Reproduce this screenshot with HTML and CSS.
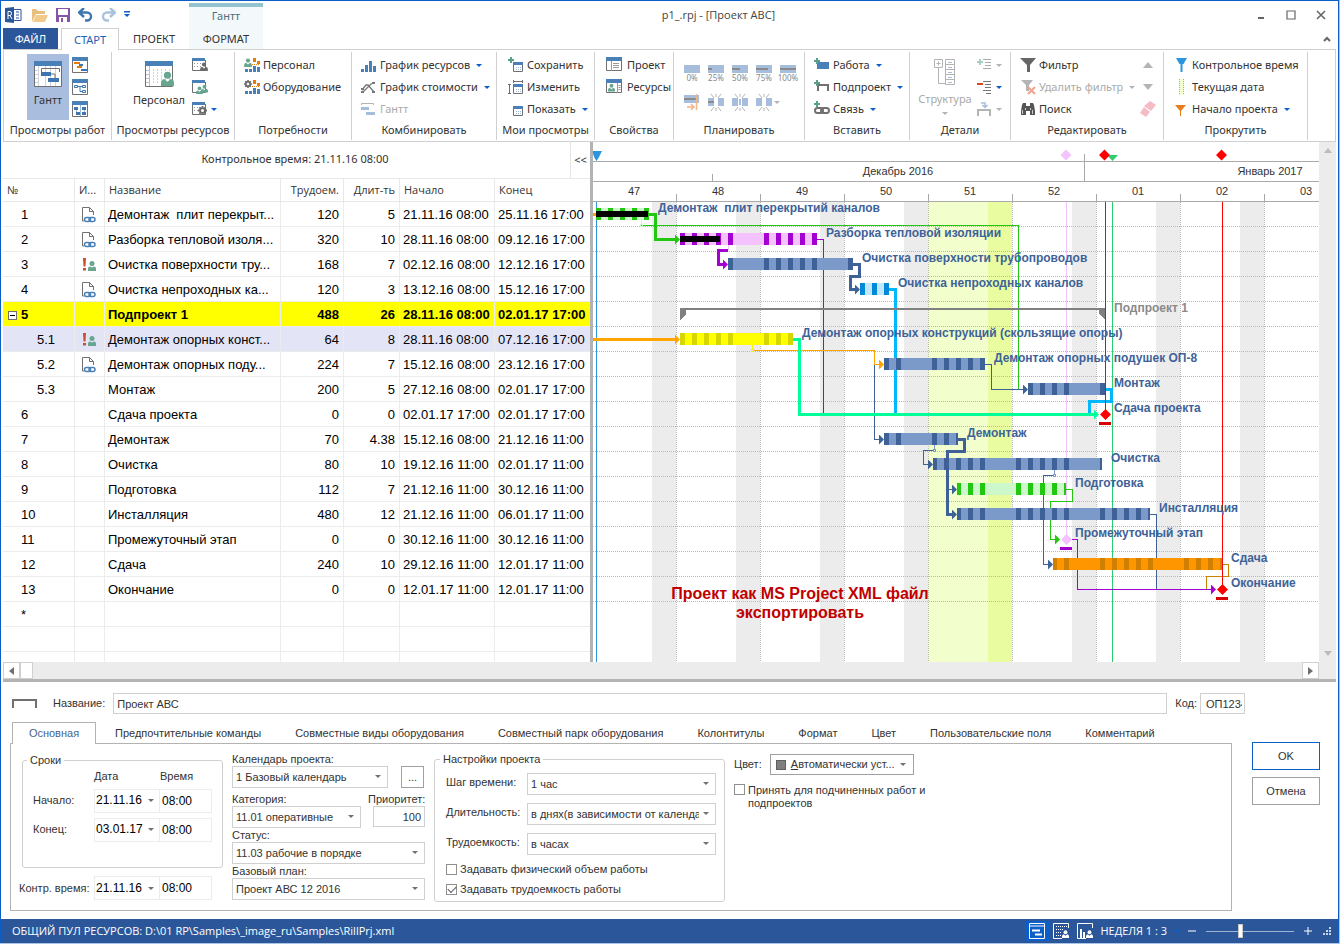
FILE: index.html
```html
<!DOCTYPE html>
<html lang="ru">
<head>
<meta charset="utf-8">
<title>p1_.rpj - [Проект АВС]</title>
<link rel="stylesheet" href="styles.css">
</head>
<body>
<svg class="sprite" aria-hidden="true">
  <defs>
    <symbol id="person" viewBox="0 0 12 14"><circle cx="6" cy="4" r="3.3"/><path d="M0 14v-3q0-3 3-3.500l3 2.500 3-2.500q3 .5 3 3.500v3z"/></symbol>
    <symbol id="gear" viewBox="0 0 10 10"><circle cx="5" cy="5" r="2.700" fill="none" stroke="currentColor" stroke-width="2"/><path d="M5 0v2M5 8v2M0 5h2M8 5h2M1.500 1.500l1.500 1.500M7 7l1.500 1.500M1.500 8.500L3 7M7 3l1.500-1.500" stroke="currentColor" stroke-width="2" fill="none"/></symbol>
    <symbol id="sheet" viewBox="0 0 16 16"><path d="M.5 4v11.500h15V4" fill="#fff" stroke="#707070"/><path d="M0 0h16v4H0z" fill="#4a80b8"/></symbol>
    <symbol id="plus" viewBox="0 0 6 6"><path d="M3 0v6M0 3h6" stroke="#58a08c" stroke-width="2"/></symbol>
    <symbol id="doc" viewBox="0 0 14 16"><path d="M2 14H.5V.5h7l4 4V8M7.500.5v4h4" fill="none" stroke="#707070"/><rect x="2.500" y="10.500" width="6" height="4" rx="2" fill="none" stroke="#4a80b8" stroke-width="1.500"/><rect x="7" y="10.500" width="6" height="4" rx="2" fill="none" stroke="#4a80b8" stroke-width="1.500"/></symbol>
    <symbol id="alert" viewBox="0 0 14 14"><path d="M1 0h3l-.5 8.500h-2zM1 10h3v2.500H1z" fill="#c8502e"/><circle cx="10" cy="5.500" r="2.500" fill="#69a68f"/><path d="M6 13V10.500q0-2 2-2l2 1 2-1q2 0 2 2V13z" fill="#69a68f"/></symbol>
    <symbol id="cal" viewBox="0 0 10 10"><path d="M.5 2v7.500h9V2" fill="#fff" stroke="#707070"/><path d="M0 0h10v3H0z" fill="#4a80b8"/><path d="M3 5.500h5M3 7.500h5" stroke="#9db9d8" stroke-dasharray="1 1"/></symbol>
    <symbol id="burst" viewBox="0 0 16 17"><path d="M0 4h6v8H0zM10 4h6v8h-6z" fill="#a6bedb"/><path d="M3 0l3 4M8 0v3M13 0l-3 4M3 17l3-4M8 17v-3M13 17l-3-4" stroke="#b4b4b4" fill="none"/></symbol>
    <marker id="m-navy" viewBox="0 0 5 10" markerUnits="userSpaceOnUse" markerWidth="5" markerHeight="10" refX="0" refY="5"><path d="M0 0l5 5-5 5z" fill="#3e6298"/></marker>
    <marker id="m-green" viewBox="0 0 5 10" markerUnits="userSpaceOnUse" markerWidth="5" markerHeight="10" refX="0" refY="5"><path d="M0 0l5 5-5 5z" fill="#22c70f"/></marker>
    <marker id="m-violet" viewBox="0 0 5 10" markerUnits="userSpaceOnUse" markerWidth="5" markerHeight="10" refX="0" refY="5"><path d="M0 0l5 5-5 5z" fill="#a500d2"/></marker>
    <marker id="m-orange" viewBox="0 0 5 10" markerUnits="userSpaceOnUse" markerWidth="5" markerHeight="10" refX="0" refY="5"><path d="M0 0l5 5-5 5z" fill="#ffa500"/></marker>
    <marker id="m-mint" viewBox="0 0 5 10" markerUnits="userSpaceOnUse" markerWidth="5" markerHeight="10" refX="0" refY="5"><path d="M0 0l5 5-5 5z" fill="#00ff99"/></marker>
    <pattern id="weekend" patternUnits="userSpaceOnUse" x="652" y="202" width="84" height="460"><path d="M0 0h24v460H0z" fill="#ececec"/></pattern>
  </defs>
</svg>

<div class="window">
  <header class="titlebar">
    <div class="quick">
      <svg width="17" height="16"><path d="M7 2.500h9v11H7" fill="#fff" stroke="#2b579a"/><path d="M0 1l9-1v16l-9-1z" fill="#2b579a"/><path d="M11 5h3M11 8h3M11 11h3" stroke="#2b579a"/><path d="M3 12V4.500h2q1.500 0 1.500 2t-1.500 2H3M5 8.500l2 3.500" stroke="#fff" fill="none"/></svg>
      <button aria-label="Открыть"><svg width="16" height="14"><path d="M0 14V1h4l2 2h7v3H4z" fill="#e8bf7c"/><path d="M4 7h12l-3 7H1z" fill="#f0cb8c"/></svg></button>
      <button aria-label="Сохранить файл"><svg width="14" height="14"><path d="M0 0h14v14H0z" fill="#8555a8"/><path d="M2 1h10v6H2zM3 9h8v5H3z" fill="#fff"/><path d="M5 10h2v4H5z" fill="#8555a8"/></svg></button>
      <button aria-label="Отменить действие"><svg width="15" height="14"><path d="M6 0L1 4.500 6 9M1.500 4.500H9a4 4 0 010 8H7" fill="none" stroke="#3f76ad" stroke-width="2.400"/></svg></button>
      <button aria-label="Повторить"><svg width="15" height="14"><path d="M9 0l5 4.500L9 9M13.500 4.500H6a4 4 0 000 8h2" fill="none" stroke="#a9c3de" stroke-width="2.400"/></svg></button>
      <button aria-label="Настроить"><svg width="6" height="7"><path d="M0 0h6v1.500H0zM0 3h6L3 6z" fill="#0a5fc8"/></svg></button>
    </div>
    <div class="context">Гантт</div>
    <h1>p1_.rpj - [Проект АВС]</h1>
    <div class="winbtns">
      <button aria-label="Свернуть"><svg width="10" height="10"><path d="M2 7h6v2H2z" fill="#666"/></svg></button>
      <button aria-label="Развернуть"><svg width="10" height="10"><path d="M1 1h8v8H1z" fill="none" stroke="#666" stroke-width="1.200"/></svg></button>
      <button aria-label="Закрыть"><svg width="10" height="10"><path d="M1 1l8 8M9 1L1 9" stroke="#666" stroke-width="1.600"/></svg></button>
    </div>
  </header>

  <nav class="tabs">
    <button class="tab file">ФАЙЛ</button>
    <button class="tab start">СТАРТ</button>
    <button class="tab project">ПРОЕКТ</button>
    <button class="tab format">ФОРМАТ</button>
    <button class="collapse" aria-label="Свернуть ленту"><svg width="8" height="6"><path d="M1 5l3-3 3 3" fill="none" stroke="#666" stroke-width="2"/></svg></button>
  </nav>

  <section class="ribbon">
    <div class="group g108">
      <div class="body views">
        <button class="big active"><svg width="28" height="26"><path d="M.5 4v21.500h27V4" fill="#fff" stroke="#707070"/><path d="M0 0h28v5H0z" fill="#4a80b8"/><path d="M4.500 5v20M11.500 5v20M16.500 5v20M21.500 5v20M1 9.500h4M1 13.500h4M1 17.500h4M1 21.500h4" stroke="#cdd5df"/><path d="M7.500 11V7.500h18V11" fill="none" stroke="#707070"/><path d="M7 11h10v4H7zM14 17h11v4H14z" fill="#3e75b0"/><path d="M17 13h4v4" stroke="#707070" fill="none"/></svg>Гантт</button>
        <div class="stack">
          <button aria-label="Диаграмма"><svg width="16" height="16"><use href="#sheet"/><path d="M2 5h6v2H2zM5 9h5v2H5z" fill="#e8790c"/><path d="M7 7h4v2H7zM9 12h6v2H9z" fill="#3e75b0"/></svg></button>
          <button aria-label="Сеть"><svg width="16" height="16"><use href="#sheet"/><path d="M2.500 6.500h3v2h-3zM10.500 6.500h3v2h-3zM10.500 11.500h3v2h-3zM6 7.500h4M8 7.500v5h2" fill="none" stroke="#3e75b0"/></svg></button>
          <button aria-label="Доска"><svg width="16" height="16"><use href="#sheet"/><path d="M2 6h4v3H2zM10 6h4v3h-4zM4 11h4v3H4zM10 11h4v3h-4z" fill="#3e75b0"/><path d="M8.500 4v11M4.500 9v2M12.500 9v2" stroke="#9db9d8"/></svg></button>
        </div>
      </div>
      <div class="caption">Просмотры работ</div>
    </div>
    <div class="group g123">
      <div class="body views2">
        <button class="big"><svg width="29" height="26"><path d="M.5 4v21.500h27V4" fill="#fff" stroke="#707070"/><path d="M0 0h28v5H0z" fill="#4a80b8"/><path d="M4.500 5v20M1 9.500h4M1 13.500h4M1 17.500h4M1 21.500h4" stroke="#b8c2ce"/><path d="M8 9h18M8 12h18M8 15h18M8 18h18M8 21h18" stroke="#9aa8b8" stroke-dasharray="1 3"/><use href="#person" x="16" y="9" width="13" height="17" fill="#69a68f"/></svg>Персонал</button>
        <div class="stack">
          <button aria-label="Люди"><svg width="16" height="16"><path d="M.5 3v10.500h13V3" fill="#fff" stroke="#707070"/><path d="M0 1h13v3H0z" fill="#4a80b8"/><path d="M2 6.500h9M2 9.500h9" stroke="#999" stroke-dasharray="1 2"/><use href="#person" x="8" y="5" width="8" height="9" fill="#6a6a6a"/></svg></button>
          <button aria-label="Команды"><svg width="16" height="16"><path d="M.5 3v10.500h13V3" fill="#fff" stroke="#707070"/><path d="M0 1h13v3H0z" fill="#4a80b8"/><use href="#person" x="4" y="7" width="7" height="8" fill="#69a68f"/><use href="#person" x="9" y="5" width="7" height="9" fill="#69a68f"/></svg></button>
          <button aria-label="Механизмы" class="wide"><svg width="16" height="16"><path d="M.5 3v10.500h13V3" fill="#fff" stroke="#707070"/><path d="M0 1h13v3H0z" fill="#4a80b8"/><path d="M2 6.500h9M2 9.500h9" stroke="#999" stroke-dasharray="1 2"/><g color="#6a6a6a"><use href="#gear" x="6" y="5" width="9" height="9"/></g></svg><i class="dd"></i></button>
        </div>
      </div>
      <div class="caption">Просмотры ресурсов</div>
    </div>
    <div class="group g117">
      <div class="body list">
        <button class="cmd"><svg width="16" height="16"><use href="#person" x="0" y="1" width="8" height="9" fill="#69a68f"/><path d="M9 1h3v4H9zM13 4h3v3h-3z" fill="#e8790c"/><path d="M1 12h3v3H1zM5 12h3v3H5zM9 9h3v6H9zM13 10h3v5h-3z" fill="#4a80b8"/><path d="M8 7.500h8" stroke="#e8790c" stroke-dasharray="1 1"/></svg>Персонал</button>
        <button class="cmd"><svg width="16" height="16"><g color="#6a6a6a"><use href="#gear" x="0" y="1" width="8" height="8"/></g><path d="M9 1h3v4H9zM13 4h3v3h-3z" fill="#e8790c"/><path d="M1 12h3v3H1zM5 12h3v3H5zM9 9h3v6H9zM13 10h3v5h-3z" fill="#4a80b8"/><path d="M8 7.500h8" stroke="#e8790c" stroke-dasharray="1 1"/></svg>Оборудование</button>
      </div>
      <div class="caption">Потребности</div>
    </div>
    <div class="group g145">
      <div class="body list">
        <button class="cmd"><svg width="16" height="16"><path d="M0 12h3v3H0zM4 8h3v7H4zM8 4h3v11H8zM12 9h3v6h-3z" fill="#4a80b8"/></svg>График ресурсов<i class="dd"></i></button>
        <button class="cmd"><svg width="16" height="16"><path d="M1 11l4-5 2 0 6 7M2 13l8-8 3-1" fill="none" stroke="#777" stroke-width="1.300"/><path d="M0 13h3M11 4h3M0 10h3M11 13h3" stroke="#777" stroke-width="2"/></svg>График стоимости<i class="dd"></i></button>
        <button class="cmd off" disabled><svg width="16" height="16"><path d="M.5 4V2.500h12V4" fill="none" stroke="#b4b4b4"/><path d="M0 6h8v3H0zM5 11h9v3H5z" fill="#a6bedb"/></svg>Гантт</button>
      </div>
      <div class="caption">Комбинировать</div>
    </div>
    <div class="group g98">
      <div class="body list">
        <button class="cmd"><svg width="16" height="16"><use href="#plus" width="6" height="6"/><use href="#cal" x="5" y="5" width="10" height="10"/></svg>Сохранить</button>
        <button class="cmd"><svg width="16" height="16"><path d="M5.500 1v3M14.500 1v3M5.500 2.500h9M0 5.500h3M1.500 5v10M0 14.500h3" stroke="#707070" fill="none"/><use href="#cal" x="5" y="5" width="10" height="10"/></svg>Изменить</button>
        <button class="cmd"><svg width="16" height="16"><use href="#cal" x="5" y="5" width="10" height="10"/></svg>Показать<i class="dd"></i></button>
      </div>
      <div class="caption">Мои просмотры</div>
    </div>
    <div class="group g79">
      <div class="body list">
        <button class="cmd"><svg width="16" height="16"><path d="M.5.5h15v13H.5z" fill="#fff" stroke="#707070"/><path d="M0 0h16v4H0z" fill="#4a80b8"/><path d="M5.500 4v10M7 6.500h6M7 8.500h6M7 10.500h6" stroke="#999"/></svg>Проект</button>
        <button class="cmd"><svg width="16" height="16"><path d="M.5.5h15v13H.5z" fill="#fff" stroke="#707070"/><path d="M0 0h16v4H0z" fill="#4a80b8"/><use href="#person" x="2" y="4" width="7" height="9" fill="#69a68f"/><path d="M11.500 4v10M12.500 6.500h2M12.500 8.500h2M12.500 10.500h2" stroke="#999"/></svg>Ресурсы</button>
      </div>
      <div class="caption">Свойства</div>
    </div>
    <div class="group g131">
      <div class="body plan">
        <button disabled class="pct"><svg width="16" height="8"><path d="M0 0h16v8H0z" fill="#a6bedb"/></svg>0%</button>
        <button disabled class="pct"><svg width="16" height="8"><path d="M0 0h16v8H0z" fill="#a6bedb"/><path d="M0 3h4v2H0z" fill="#8a8a8a"/></svg>25%</button>
        <button disabled class="pct"><svg width="16" height="8"><path d="M0 0h16v8H0z" fill="#a6bedb"/><path d="M0 3h8v2H0z" fill="#8a8a8a"/></svg>50%</button>
        <button disabled class="pct"><svg width="16" height="8"><path d="M0 0h16v8H0z" fill="#a6bedb"/><path d="M0 3h12v2H0z" fill="#8a8a8a"/></svg>75%</button>
        <button disabled class="pct"><svg width="16" height="8"><path d="M0 0h16v8H0z" fill="#a6bedb"/><path d="M0 3h16v2H0z" fill="#8a8a8a"/></svg>100%</button>
        <button disabled aria-label="Сдвиг"><svg width="16" height="17"><path d="M0 1h15v8H0z" fill="#a6bedb"/><path d="M0 4h12v2H0z" fill="#8a8a8a"/><path d="M12.500 0v16M3 13h6M7 10l3 3-3 3" fill="none" stroke="#f2b48a" stroke-width="1.500"/></svg></button>
        <button disabled aria-label="Разделить"><svg width="16" height="17"><use href="#burst"/><path d="M0 7h6v2H0z" fill="#8a8a8a"/></svg></button>
        <button disabled aria-label="Разбить"><svg width="16" height="17"><use href="#burst"/><path d="M7 5h2v6H7z" fill="#a6bedb"/></svg></button>
        <button disabled aria-label="Соединить" class="wide"><svg width="16" height="17"><use href="#burst"/></svg><i class="dd grey"></i></button>
      </div>
      <div class="caption">Планировать</div>
    </div>
    <div class="group g105">
      <div class="body list">
        <button class="cmd"><svg width="16" height="16"><path d="M3 5h12v7H3z" fill="#4a80b8"/><use href="#plus" y="1" width="6" height="6"/></svg>Работа<i class="dd"></i></button>
        <button class="cmd"><svg width="16" height="16"><path d="M4 12V6h10v6" fill="none" stroke="#707070" stroke-width="2"/><use href="#plus" y="1" width="6" height="6"/></svg>Подпроект<i class="dd"></i></button>
        <button class="cmd"><svg width="16" height="16"><use href="#plus" y="0" width="6" height="6"/><rect x="1" y="7" width="8" height="5" rx="2.500" fill="none" stroke="#707070" stroke-width="2"/><rect x="7" y="7" width="8" height="5" rx="2.500" fill="none" stroke="#707070" stroke-width="2"/></svg>Связь<i class="dd"></i></button>
      </div>
      <div class="caption">Вставить</div>
    </div>
    <div class="group g101">
      <div class="body detail">
        <button class="big off" disabled><svg width="22" height="27"><path d="M.5.5h8v8h-8zM4.500 2.500v4M2.500 4.500h4M4.500 8.500v16H11M11.500.5h9v25h-9zM11.500 5.500h9M11.500 10.500h9M11.500 15.500h9M11.500 20.500h9" fill="none" stroke="#b4b4b4"/><path d="M14 3.500h4M14 8.500h4M14 13.500h4M14 18.500h4M14 23.500h4" stroke="#a6bedb"/></svg>Структура<i class="dd grey"></i></button>
        <div class="stack">
          <button disabled class="wide" aria-label="Добавить уровень"><svg width="16" height="16"><path d="M3 2v6M0 5h6" stroke="#a9d0c3" stroke-width="2"/><path d="M6 2.500h8M8 5.500h6M8 8.500h6M6 11.500h8" stroke="#aaa"/></svg><i class="dd grey"></i></button>
          <button class="wide" aria-label="Убрать уровень"><svg width="16" height="16"><path d="M0 5h6" stroke="#d8481c" stroke-width="2"/><path d="M6 2.500h8M8 5.500h6M8 8.500h6M6 11.500h8M9 14.500h5" stroke="#777"/></svg><i class="dd"></i></button>
          <button disabled class="wide" aria-label="Свернуть уровень"><svg width="16" height="16"><path d="M1 15V9h12v6" stroke="#b4b4b4" stroke-width="2" fill="none"/><path d="M4 2h4v4M5.500 4L8 6.500 10.500 4" fill="none" stroke="#a6bedb" stroke-width="1.500"/></svg><i class="dd grey"></i></button>
        </div>
      </div>
      <div class="caption">Детали</div>
    </div>
    <div class="group g153">
      <div class="body edit">
        <div class="list">
          <button class="cmd"><svg width="16" height="16"><path d="M0 1h16l-6 7v7H7V8z" fill="#666"/></svg>Фильтр</button>
          <button class="cmd off" disabled><svg width="16" height="16"><path d="M1 1h12L9 6v6H6V6z" fill="#b4b4b4"/><path d="M8 8l7 7M15 8l-7 7" stroke="#efa38c" stroke-width="2"/></svg>Удалить фильтр<i class="dd grey"></i></button>
          <button class="cmd"><svg width="16" height="16"><path d="M2 4l1-2h3v3h4V2h3l1 2 1 6v4h-5v-4H6v4H1v-4z" fill="#555"/><path d="M2.500 13V9M12.500 13V9M5.500 7v2M10.500 7v2" stroke="#ccc"/></svg>Поиск</button>
        </div>
        <div class="stack arrows">
          <button disabled aria-label="Предыдущий"><svg width="16" height="16"><path d="M3 11h10L8 5z" fill="#b4b4b4"/></svg></button>
          <button disabled aria-label="Следующий"><svg width="16" height="16"><path d="M3 5h10l-5 6z" fill="#b4b4b4"/></svg></button>
          <button disabled aria-label="Очистить"><svg width="16" height="16"><path d="M10 0l6 4-5 6-7-5z" fill="#f5bcc5"/><path d="M4 6l6 5-4 5-6-4z" fill="#f5bcc5"/></svg></button>
        </div>
      </div>
      <div class="caption">Редактировать</div>
    </div>
    <div class="group g144">
      <div class="body list">
        <button class="cmd"><svg width="16" height="16"><path d="M3 1h11l-3.500 6h-1v8h-2V7h-1z" fill="#2b95e0"/></svg>Контрольное время</button>
        <button class="cmd"><svg width="16" height="16"><path d="M6 0h5v16H6z" fill="#f2ffcc"/><path d="M6.500 0v16M10.500 0v16" stroke="#aaa" stroke-dasharray="1 1"/></svg>Текущая дата</button>
        <button class="cmd"><svg width="16" height="16"><path d="M2 4h11L8 10v5H7v-5z" fill="#e87f1e"/></svg>Начало проекта<i class="dd"></i></button>
      </div>
      <div class="caption">Прокрутить</div>
    </div>
  </section>

  <main class="work">
    <section class="sheet">
      <div class="control"><span>Контрольное время: 21.11.16 08:00</span><button>&lt;&lt;</button></div>
      <table>
        <colgroup><col class="c1"><col class="c2"><col class="c3"><col class="c4"><col class="c5"><col class="c6"><col class="c6"></colgroup>
        <thead><tr><th>№</th><th>И...</th><th>Название</th><th class="r">Трудоем.</th><th class="r">Длит-ть</th><th>Начало</th><th>Конец</th></tr></thead>
        <tbody>
          <tr><td class="n">1</td><td class="i"><svg width="14" height="16"><use href="#doc"/></svg></td><td>Демонтаж  плит перекрыт...</td><td class="r">120</td><td class="r">5</td><td>21.11.16 08:00</td><td>25.11.16 17:00</td></tr>
          <tr><td class="n">2</td><td class="i"><svg width="14" height="16"><use href="#doc"/></svg></td><td>Разборка тепловой изоля...</td><td class="r">320</td><td class="r">10</td><td>28.11.16 08:00</td><td>09.12.16 17:00</td></tr>
          <tr><td class="n">3</td><td class="i"><svg width="14" height="14"><use href="#alert"/></svg></td><td>Очистка поверхности тру...</td><td class="r">168</td><td class="r">7</td><td>02.12.16 08:00</td><td>12.12.16 17:00</td></tr>
          <tr><td class="n">4</td><td class="i"><svg width="14" height="16"><use href="#doc"/></svg></td><td>Очистка непроходных ка...</td><td class="r">120</td><td class="r">3</td><td>13.12.16 08:00</td><td>15.12.16 17:00</td></tr>
          <tr class="sum"><td class="fold"><button aria-label="Свернуть подпроект"></button>5</td><td></td><td>Подпроект 1</td><td class="r">488</td><td class="r">26</td><td>28.11.16 08:00</td><td>02.01.17 17:00</td></tr>
          <tr class="sel"><td class="s">5.1</td><td class="i"><svg width="14" height="14"><use href="#alert"/></svg></td><td>Демонтаж опорных конст...</td><td class="r">64</td><td class="r">8</td><td>28.11.16 08:00</td><td>07.12.16 17:00</td></tr>
          <tr><td class="s">5.2</td><td class="i"><svg width="14" height="16"><use href="#doc"/></svg></td><td>Демонтаж опорных поду...</td><td class="r">224</td><td class="r">7</td><td>15.12.16 08:00</td><td>23.12.16 17:00</td></tr>
          <tr><td class="s">5.3</td><td></td><td>Монтаж</td><td class="r">200</td><td class="r">5</td><td>27.12.16 08:00</td><td>02.01.17 17:00</td></tr>
          <tr><td class="n">6</td><td></td><td>Сдача проекта</td><td class="r">0</td><td class="r">0</td><td>02.01.17 17:00</td><td>02.01.17 17:00</td></tr>
          <tr><td class="n">7</td><td></td><td>Демонтаж</td><td class="r">70</td><td class="r">4.38</td><td>15.12.16 08:00</td><td>21.12.16 11:00</td></tr>
          <tr><td class="n">8</td><td></td><td>Очистка</td><td class="r">80</td><td class="r">10</td><td>19.12.16 11:00</td><td>02.01.17 11:00</td></tr>
          <tr><td class="n">9</td><td></td><td>Подготовка</td><td class="r">112</td><td class="r">7</td><td>21.12.16 11:00</td><td>30.12.16 11:00</td></tr>
          <tr><td class="n">10</td><td></td><td>Инсталляция</td><td class="r">480</td><td class="r">12</td><td>21.12.16 11:00</td><td>06.01.17 11:00</td></tr>
          <tr><td class="n">11</td><td></td><td>Промежуточный этап</td><td class="r">0</td><td class="r">0</td><td>30.12.16 11:00</td><td>30.12.16 11:00</td></tr>
          <tr><td class="n">12</td><td></td><td>Сдача</td><td class="r">240</td><td class="r">10</td><td>29.12.16 11:00</td><td>12.01.17 11:00</td></tr>
          <tr><td class="n">13</td><td></td><td>Окончание</td><td class="r">0</td><td class="r">0</td><td>12.01.17 11:00</td><td>12.01.17 11:00</td></tr>
          <tr><td class="n">*</td><td></td><td></td><td></td><td></td><td></td><td></td></tr>
          <tr><td></td><td></td><td></td><td></td><td></td><td></td><td></td></tr>
          <tr><td></td><td></td><td></td><td></td><td></td><td></td><td></td></tr>
        </tbody>
      </table>
    </section>

    <section class="chart">
      <svg width="726" height="520" viewBox="593 142 726 520" role="img" aria-label="Диаграмма Гантта">
        <path d="M652 202h667v460H652z" fill="url(#weekend)"/>
        <path d="M928 202h60v460h-60z" fill="#f2ffcc"/><path d="M988 202h24v460h-24z" fill="#e9fda0"/>
        <g shape-rendering="crispEdges">
          <path class="dots" d="M593 226.500h726M593 251.500h726M593 276.500h726M593 301.500h726M593 326.500h726M593 351.500h726M593 376.500h726M593 401.500h726M593 426.500h726M593 451.500h726M593 476.500h726M593 501.500h726M593 526.500h726M593 551.500h726M593 576.500h726M593 601.500h726"/>
          <path class="dots" d="M676.500 202v460M760.500 202v460M844.500 202v460M928.500 202v460M1012.500 202v460M1096.500 202v460M1180.500 202v460M1264.500 202v460"/>
          <path class="axis" d="M593 161.500h726M593 181.500h726M593 201.500h726M712.500 174v7M1084.500 154v27M676.500 194v7M760.500 194v7M844.500 194v7M928.500 194v7M1012.500 194v7M1096.500 194v7M1180.500 194v7M1264.500 194v7"/>
          <path d="M596.500 202v460" stroke="#2b95e0"/>
          <path d="M1066.500 202v337" stroke="#f3c2ff"/>
          <path d="M1112.500 202v460" stroke="#2ecc71"/>
        </g>
        <g class="scale">
          <text x="634" y="195">47</text><text x="718" y="195">48</text><text x="802" y="195">49</text><text x="886" y="195">50</text><text x="970" y="195">51</text><text x="1054" y="195">52</text><text x="1138" y="195">01</text><text x="1222" y="195">02</text><text x="1306" y="195">03</text>
          <text x="898" y="175">Декабрь 2016</text><text x="1270" y="175">Январь 2017</text>
        </g>
        <g shape-rendering="crispEdges">
          <path class="l" stroke="#22c70f" d="M641 225.500h377.500V389"/>
          <path class="l" stroke="#a500d2" d="M817 239.500h6.500V414"/>
          <path class="l" stroke="#3e6298" marker-end="url(#m-navy)" d="M874.500 364v75.500H879"/>
          <path class="l" stroke="#ffa500" marker-end="url(#m-orange)" d="M753 350.500h121.500v14H879"/>
          <path class="l" stroke="#3e6298" marker-end="url(#m-navy)" d="M985 364.500h6.500v25H1023"/>
          <path class="l" stroke="#3e6298" marker-end="url(#m-navy)" d="M934 450.500h-10.500v14h4.500"/>
          <path class="l" stroke="#3e6298" marker-end="url(#m-navy)" d="M947 489.500h5"/>
          <path class="l" stroke="#22c70f" marker-end="url(#m-green)" d="M1066 489.500h6.500v12h-22v38h4.500"/>
          <path class="l" stroke="#3e6298" d="M1150 514.500h6.500V589"/>
          <path class="l" stroke="#a500d2" marker-end="url(#m-violet)" d="M1072 539.500h5.500v50H1211"/>
          <path class="l" stroke="#d08000" d="M1222 564.500h6.500v12h-22V589"/>
          <path class="t" stroke="#00b8ff" d="M889 289.500h6.500V414"/>
          <path class="t" stroke="#00ff99" marker-end="url(#m-mint)" d="M793 339.500h6.500v75H1094"/>
          <path class="t" stroke="#22c70f" marker-end="url(#m-green)" d="M649 214.500h6.500v25H675"/>
          <path class="t" stroke="#a500d2" marker-end="url(#m-violet)" d="M728 250.500h-9.500v14h4.500"/>
          <path class="t" stroke="#3e6298" marker-end="url(#m-navy)" d="M853 264.500h6.500v12h-9v13h4.500"/>
          <path class="t" stroke="#ffa500" marker-end="url(#m-orange)" d="M593 339.500h82"/>
          <path class="t" stroke="#00b8ff" d="M1105 389.500h6.500v12h-22V413"/>
          <path class="t" stroke="#ffa500" d="M593 214.500h4"/>

          <path fill="#ccf8cc" d="M596 208h53v12h-53z"/><path class="s" stroke="#22c70f" d="M596 214h5m7 0h5m7 0h5m7 0h5m7 0h5"/><path d="M596 211h52v6h-52z"/>
          <path fill="#f3c2ff" d="M680 233h137v12H680z"/><path class="s" stroke="#a500d2" d="M680 239h5m7 0h5m7 0h5m7 0h5m7 0h5m31 0h5m7 0h5m7 0h5m7 0h5m7 0h5"/><path d="M680 236h40v6h-40z"/>
          <path fill="#7b9ac9" d="M728 258h125v12H728zM884 358h101v12H884zM1028 383h77v12h-77zM884 433h74v12h-74zM933 458h169v12H933zM957 508h193v12H957z"/>
          <path class="s" stroke="#3e6298" d="M728 264h5m31 0h5m7 0h5m7 0h5m7 0h5m7 0h5m31 0h5M884 364h5m7 0h5m31 0h5m7 0h5m7 0h5m7 0h5m7 0h5M1028 389h5m7 0h5m7 0h5m7 0h5m31 0h5M884 439h5m7 0h5m31 0h5m7 0h5m7 0h2M933 464h4m7 0h5m7 0h5m7 0h5m7 0h5m31 0h5m7 0h5m7 0h5m7 0h5m7 0h5m31 0h2M957 514h4m7 0h5m7 0h5m31 0h5m7 0h5m7 0h5m7 0h5m7 0h5m31 0h5m7 0h5m7 0h5m7 0h5m7 0h2"/>
          <path fill="#c2e8ff" d="M860 283h29v12h-29z"/><path class="s" stroke="#0089d6" d="M860 289h5m7 0h5m7 0h5"/>
          <path fill="#ff0" d="M680 333h113v12H680z"/><path class="s" stroke="#d6d600" d="M680 339h5m7 0h5m7 0h5m7 0h5m7 0h5m31 0h5m7 0h5m7 0h5"/>
          <path fill="#ccf8cc" d="M957 483h109v12H957z"/><path class="s" stroke="#22c70f" d="M957 489h4m7 0h5m7 0h5m31 0h5m7 0h5m7 0h5m7 0h5m7 0h2"/>
          <path fill="#ff9600" d="M1053 558h169v12h-169z"/><path class="s" stroke="#d08000" d="M1053 564h4m7 0h5m31 0h5m7 0h5m7 0h5m7 0h5m7 0h5m31 0h5m7 0h5m7 0h5m7 0h2"/>

          <path class="l" stroke="#3e6298" d="M1054 475.500h-10.500V483M1043.500 495v13M1043.500 520v44.500h4.500" marker-end="url(#m-navy)"/>
          <path class="t" stroke="#3e6298" marker-end="url(#m-navy)" d="M958 439.500h6.500v12h-17v63h4.500"/>
          <path class="l" stroke="#ccf8cc" d="M641.500 220v4m-1 0h2v2h-2z"/>
          <path class="l" stroke="#f3c2ff" d="M728.500 245v5"/>
          <path class="l" stroke="#f5f500" d="M752.500 345v4m-1 0h2v2h-2z"/>
          <path class="l" stroke="#7b9ac9" d="M934.500 445v4m-1 0h2v2h-2zM1054.500 470v4m-1 0h2v2h-2z"/>
          <path d="M1105.500 202v212M1222.500 202v387" stroke="#f00"/>
          <path fill="#808080" d="M680 308h425v12l-6-6v-4H686v4l-6 6z"/>
          <path fill="#d60000" d="M1099 422h12v3h-12zM1216 597h12v3h-12z"/><path fill="#a500d2" d="M1060 547h12v3h-12z"/>
        </g>
        <path fill="#f3c2ff" d="M1066 149.500l5.500 5.500-5.500 5.500-5.500-5.500zM1066.500 534l5.500 5.500-5.500 5.500-5.500-5.500z"/>
        <path fill="#2ecc71" d="M1107 155h11l-5.500 6z"/>
        <path fill="#f00" d="M1104.500 149.500l5.500 5.500-5.500 5.500-5.500-5.500zM1221.500 149.500l5.500 5.500-5.500 5.500-5.500-5.500zM1105.500 409l5.500 5.500-5.500 5.500-5.500-5.500zM1222.500 584l5.500 5.500-5.500 5.500-5.500-5.500z"/>
        <path fill="#2b95e0" d="M592 151h10l-3.500 7-2 3-2-3z"/>
        <g class="names">
          <text x="658" y="212">Демонтаж  плит перекрытий каналов</text>
          <text x="826" y="237">Разборка тепловой изоляции</text>
          <text x="862" y="262">Очистка поверхности трубопроводов</text>
          <text x="898" y="287">Очистка непроходных каналов</text>
          <text x="1114" y="312" class="dim">Подпроект 1</text>
          <text x="802" y="337">Демонтаж опорных конструкций (скользящие опоры)</text>
          <text x="994" y="362">Демонтаж опорных подушек ОП-8</text>
          <text x="1114" y="387">Монтаж</text>
          <text x="1114" y="412">Сдача проекта</text>
          <text x="967" y="437">Демонтаж</text>
          <text x="1111" y="462">Очистка</text>
          <text x="1075" y="487">Подготовка</text>
          <text x="1159" y="512">Инсталляция</text>
          <text x="1075" y="537">Промежуточный этап</text>
          <text x="1231" y="562">Сдача</text>
          <text x="1231" y="587">Окончание</text>
        </g>
        <g class="note"><text x="800" y="599">Проект как MS Project XML файл</text><text x="800" y="618">экспортировать</text></g>
      </svg>
    </section>
    <div class="vscroll"><i class="up"></i><i class="down"></i></div>
  </main>
  <div class="hscroll"><button aria-label="Влево"><i></i></button><span class="thumb"></span><button class="right" aria-label="Вправо"><i></i></button></div>

  <section class="props">
    <div class="namerow">
      <svg width="25" height="9"><path d="M1 9V1h23v8" fill="none" stroke="#707070" stroke-width="2"/></svg>
      <label for="name">Название:</label><input id="name" class="box grow" value="Проект АВС">
      <label for="code">Код:</label><input id="code" class="box code" value="ОП1234">
    </div>
    <div class="lower">
      <div class="dialog">
        <div class="ptabs">
          <button class="on">Основная</button><button>Предпочтительные команды</button><button>Совместные виды оборудования</button><button>Совместный парк оборудования</button><button>Колонтитулы</button><button>Формат</button><button>Цвет</button><button>Пользовательские поля</button><button>Комментарий</button>
        </div>
        <div class="page">
          <div class="col dates">
            <fieldset><legend>Сроки</legend>
              <div class="dgrid">
                <span></span><span>Дата</span><span>Время</span>
                <label for="d1">Начало:</label><span class="date"><input id="d1" value="21.11.16"><i></i></span><input class="time" aria-label="Время начала" value="08:00">
                <label for="d2">Конец:</label><span class="date"><input id="d2" value="03.01.17"><i></i></span><input class="time" aria-label="Время конца" value="08:00">
              </div>
            </fieldset>
            <div class="ctl"><label for="d3">Контр. время:</label><span class="date"><input id="d3" value="21.11.16"><i></i></span><input class="time" aria-label="Контрольное время" value="08:00"></div>
          </div>
          <div class="col cats">
            <div class="field first"><label for="cal-s">Календарь проекта:</label><div class="line"><span class="pick"><select id="cal-s"><option>1 Базовый календарь</option></select></span><button class="more">...</button></div></div>
            <div class="pair">
              <div class="field"><label for="cat">Категория:</label><span class="pick"><select id="cat"><option>11.01 оперативные</option></select></span></div>
              <div class="field prio"><label for="prio">Приоритет:</label><input id="prio" class="box" value="100"></div>
            </div>
            <div class="field"><label for="st">Статус:</label><span class="pick"><select id="st"><option>11.03 рабочие в порядке</option></select></span></div>
            <div class="field"><label for="bp">Базовый план:</label><span class="pick"><select id="bp"><option>Проект АВС 12 2016</option></select></span></div>
          </div>
          <fieldset class="col setup"><legend>Настройки проекта</legend>
            <div class="sgrid">
              <label for="step">Шаг времени:</label><span class="pick"><select id="step"><option>1 час</option></select></span>
              <label for="dur">Длительность:</label><span class="pick"><select id="dur"><option>в днях(в зависимости от календаря)</option></select></span>
              <label for="lab">Трудоемкость:</label><span class="pick"><select id="lab"><option>в часах</option></select></span>
            </div>
            <label class="check"><input type="checkbox"><span>Задавать физический объем работы</span></label>
            <label class="check"><input type="checkbox" checked><span>Задавать трудоемкость работы</span></label>
          </fieldset>
          <div class="col color">
            <div class="crow"><span>Цвет:</span><button class="cbtn"><b></b><span><u>А</u>втоматически уст...</span><i></i></button></div>
            <label class="check"><input type="checkbox"><span>Принять для подчиненных работ и подпроектов</span></label>
          </div>
        </div>
      </div>
      <div class="actions"><button class="ok">OK</button><button>Отмена</button></div>
    </div>
  </section>

  <footer class="status">
    <span class="path">ОБЩИЙ ПУЛ РЕСУРСОВ: D:\01 RP\Samples\_image_ru\Samples\RillPrj.xml</span>
    <button class="sb on" aria-label="Вид Гантт"><svg width="16" height="16" fill="none" stroke="#fff"><path d="M.5.500h15v15H.5zM1 3h14"/><path d="M3 7.500h8M6 11.500h7" stroke-width="2"/></svg></button>
    <button class="sb" aria-label="Вид ресурсов"><svg width="16" height="16"><path d="M15.500 5V.5H.5v15H9" fill="none" stroke="#fff"/><path d="M3 3.500h11M3 6.500h7M3 9.500h6M3 12.500h5" stroke="#fff" stroke-dasharray="1 1"/><use href="#person" x="9" y="6" width="7" height="10" fill="#fff"/></svg></button>
    <button class="sb" aria-label="Вид нагрузки"><svg width="16" height="16"><path d="M15.500 5V.5H.5v15H9" fill="none" stroke="#fff"/><path d="M3 6h2v9H3zM6 9h2v6H6z" fill="#fff"/><use href="#person" x="9" y="6" width="7" height="10" fill="#fff"/></svg></button>
    <span class="zoom">НЕДЕЛЯ 1 : 3</span><i class="dd"></i>
    <button class="z" aria-label="Мельче"><svg width="8" height="8"><path d="M0 4h8" stroke="#fff"/></svg></button>
    <input type="range" min="0" max="100" value="38" aria-label="Масштаб">
    <button class="z" aria-label="Крупнее"><svg width="8" height="8"><path d="M0 4h8M4 0v8" stroke="#fff"/></svg></button>
    <svg class="grip" width="9" height="9"><path d="M6 0h2v2H6zM3 3h2v2H3zM6 3h2v2H6zM0 6h2v2H0zM3 6h2v2H3zM6 6h2v2H6z" fill="#c8d4e6"/></svg>
  </footer>
</div>
</body>
</html>
```
FILE: styles.css
```css
* { box-sizing: border-box; }
body { margin: 0; background: #a8c4e6; font: 11px/16px "Noto Sans", "Open Sans", sans-serif; color: #333; overflow: hidden; }
button, input, select { font: inherit; color: inherit; margin: 0; padding: 0; border: 0; background: none; border-radius: 0; }
button svg, .quick svg { display: block; flex: none; }
.sprite { position: absolute; width: 0; height: 0; }
.window { height: calc(100vh - 1px); margin-right: 1px; border: 1px solid #0a5fc8; border-bottom: 0; background: #fff; display: flex; flex-direction: column; }

/* title bar and tabs */
.titlebar { display: flex; height: 27px; padding-left: 2px; flex: none; }
.quick { width: 186px; display: flex; align-items: center; gap: 8px; padding-left: 2px; }
.quick > svg { margin-right: 2px; }
.context { width: 74px; margin-top: 2px; border-top: 4px solid #94c3d0; background: #f3f8fb; text-align: center; line-height: 17px; color: #4f6f78; }
h1 { flex: 1; margin: 0; padding-right: 72px; font: 11px/28px "Open Sans", sans-serif; text-align: center; color: #444; }
.winbtns { display: flex; margin-right: 2px; }
.winbtns button { width: 30px; display: grid; place-items: center; }
.tabs { display: flex; height: 21px; padding-left: 2px; flex: none; }
.tab { height: 21px; line-height: 21px; text-align: center; }
.file { width: 55px; background: #2b579a; color: #fff; }
.start { width: 58px; height: 22px; margin-left: 3px; border: 1px solid #d0d0d0; border-bottom: 0; color: #1f60b8; background: #fff; position: relative; }
.project { width: 70px; }
.format { width: 74px; background: #f3f8fb; }
.collapse { margin-left: auto; padding-right: 7px; }

/* ribbon */
.ribbon { display: flex; flex: none; margin: 0 2px; height: 93px; border: 1px solid #d0d0d0; padding: 2px 0 1px; }
.group { border-right: 1px solid #d0d0d0; display: flex; flex-direction: column; padding-top: 2px; flex: none; }
.g108 { width: 108px; } .g123 { width: 123px; } .g117 { width: 117px; } .g145 { width: 145px; } .g98 { width: 98px; } .g79 { width: 79px; } .g131 { width: 131px; } .g105 { width: 105px; } .g101 { width: 101px; } .g153 { width: 153px; } .g144 { width: 144px; }
.body { height: 66px; flex: none; }
.caption { text-align: center; line-height: 20px; white-space: nowrap; }
.list { padding-left: 9px; display: flex; flex-direction: column; align-items: flex-start; }
.g98 .list, .g79 .list { padding-left: 11px; }
.g79 .cmd { gap: 5px; }
.cmd { height: 22px; display: flex; align-items: center; gap: 3px; white-space: nowrap; }
.off { color: #aaa; }
.dd { display: inline-block; border: 3px solid transparent; border-top-color: #0a5fc8; border-bottom: 0; margin-left: 3px; flex: none; }
.dd.grey { border-top-color: #b4b4b4; }
.views, .views2, .detail, .edit { display: flex; }
.views { padding-left: 23px; }
.views2 { padding-left: 19px; }
.detail { padding-left: 7px; }
.big { display: flex; flex-direction: column; align-items: center; width: 42px; height: 66px; padding-top: 7px; gap: 5px; }
.views2 .big { width: 56px; }
.detail .big { width: 56px; padding-top: 5px; }
.detail .big .dd { margin: 0; }
.active { background: #a9bede; }
.stack { display: flex; flex-direction: column; padding-left: 3px; }
.views2 .stack { padding-left: 5px; }
.stack button { height: 22px; width: 16px; display: flex; align-items: center; }
.detail .stack { padding-left: 4px; }
.edit .list { width: 121px; }
.edit .stack { margin-left: auto; padding: 0 7px 0 0; }
.plan { display: grid; grid-template-columns: repeat(5, 24px); grid-template-rows: 30px 24px; padding: 6px 0 0 6px; }
.plan button { display: flex; align-items: center; justify-content: center; height: 24px; }
.plan .pct { flex-direction: column; justify-content: flex-start; padding-top: 5px; font: 8px/10px "Noto Sans", sans-serif; color: #888; }
.plan .wide { justify-content: flex-start; padding-left: 4px; }
.plan .wide .dd { margin-left: 2px; }

/* task sheet */
.work { display: flex; flex: 1; min-height: 0; margin: 0 2px; overflow: hidden; }
.sheet { flex: none; width: 590px; border-right: 3px solid #b3b3b3; overflow: hidden; }
.control { height: 36px; display: flex; font: 11px/34px "Noto Sans", sans-serif; }
.control span { flex: 1; text-align: center; padding-left: 17px; }
.control button { width: 20px; border-left: 1px solid #e4e4e4; }
table { width: 587px; table-layout: fixed; border-spacing: 0; font: 13px/22px "Liberation Sans", Arial, sans-serif; color: #000; white-space: pre; }
.c1 { width: 72px; } .c2 { width: 30px; } .c3 { width: 176px; } .c4 { width: 63px; } .c5 { width: 56px; } .c6 { width: 95px; }
th { height: 24px; padding: 0 4px; border: 1px solid #e8e8e8; border-left: 0; font: 11px/22px "Open Sans", sans-serif; color: #333; text-align: left; }
td { height: 25px; padding: 2px 3px 0; border: solid #ececec; border-width: 0 1px 1px 0; overflow: hidden; }
th:last-child, td:last-child { border-right: 0; }
.r { text-align: right; padding-right: 4px; }
.n { padding-left: 18px; }
.s { padding-left: 34px; }
.i { padding-left: 7px; }
.i svg { display: block; }
.fold { padding-left: 5px; }
.fold button { display: inline-block; width: 9px; height: 9px; margin-right: 4px; border: 1px solid #707070; background: linear-gradient(#000, #000) center / 5px 1px no-repeat #fff; }
.sum td { background: #ff0; font-weight: bold; }
.sel td { background: #e4e4f7; }

/* chart */
.chart { flex: 1; min-width: 0; overflow: hidden; }
.chart svg { display: block; }
.dots { stroke: #b8b8b8; stroke-dasharray: 1 1; }
.axis { stroke: #aaa; }
.scale { font: 11px "Liberation Sans", Arial, sans-serif; text-anchor: middle; fill: #333; }
.names { font: bold 12px "Liberation Sans", Arial, sans-serif; fill: #3e6298; }
.names text { white-space: pre; }
.names .dim { fill: #8a8a8a; }
.note { font: bold 16px "Liberation Sans", Arial, sans-serif; fill: #c00000; text-anchor: middle; }
.l { fill: none; stroke-width: 1; }
.t { fill: none; stroke-width: 3; }
.s[stroke] { fill: none; stroke-width: 12; }
.vscroll { width: 17px; background: #ececec; display: flex; flex-direction: column; justify-content: space-between; align-items: center; padding: 6px 0; }
.vscroll i { border: 4px solid transparent; }
.vscroll .up { border-bottom: 5px solid #bbb; border-top: 0; }
.vscroll .down { border-top: 5px solid #bbb; border-bottom: 0; }
.hscroll { flex: none; display: flex; height: 20px; margin: 0 2px; background: #ececec; border-bottom: 3px solid #b3b3b3; }
.hscroll button { width: 17px; background: #fff; border: 1px solid #d0d0d0; display: grid; place-items: center; }
.hscroll .thumb { width: 13px; background: #fff; border: 1px solid #d0d0d0; }
.hscroll i { border: 4px solid transparent; border-right: 5px solid #707070; border-left: 0; }
.hscroll .right { margin-left: auto; margin-right: 17px; }
.hscroll .right i { border-left: 5px solid #707070; border-right: 0; }

/* properties */
.props { flex: none; height: 237px; padding: 11px 18px 0 9px; font: 11px/13px "Liberation Sans", Arial, sans-serif; color: #333; }
.namerow { display: flex; align-items: center; height: 21px; padding: 0 75px 0 2px; }
.namerow label { margin: 0 8px 0 16px; }
.namerow .grow + label { margin: 0 3px 0 8px; }
.box { border: 1px solid #d0d0d0; height: 21px; padding: 0 3px; background: #fff; }
.grow { flex: 1; }
.code { width: 45px; padding: 0 2px 0 5px; }
.lower { display: flex; gap: 20px; margin-top: 8px; }
.dialog { flex: 1; }
.ptabs { display: flex; padding-left: 2px; }
.ptabs button { height: 21px; padding: 1px 17px 0; white-space: nowrap; }
.ptabs .on { width: 84px; height: 22px; padding: 0; margin: 0 2px -1px 0; border: 1px solid #b3b3b3; border-bottom: 0; background: #fff; color: #4a648c; position: relative; }
.page { height: 168px; border: 1px solid #b3b3b3; display: flex; padding: 9px 7px 8px 8px; }
fieldset { min-width: 0; margin: 0; border: 1px solid #d0d0d0; border-radius: 3px; padding: 0 10px; }
legend { padding: 0 3px; margin-left: -6px; }
.dates { width: 204px; margin-right: 9px; display: flex; flex-direction: column; padding-top: 1px; }
.dates fieldset { margin-left: 3px; height: 114px; }
.dgrid { display: grid; grid-template-columns: 61px 66px 52px; grid-template-rows: 19px 29px 29px; align-items: center; }
.date { display: flex; align-items: center; height: 24px; border: 1px solid #ececec; width: 66px; }
.date input { width: 53px; padding-left: 1px; color: #000; }
.date i, .cbtn i { border: 3px solid transparent; border-top-color: #707070; border-bottom: 0; }
.time { height: 24px; width: 52px; border: 1px solid #ececec; border-left: 0; padding-left: 2px; color: #000; }
.ctl { display: flex; align-items: center; margin-top: 8px; }
.ctl label { width: 75px; white-space: nowrap; }
.date, .time { font-size: 12px; }
.cats { width: 193px; margin-right: 9px; display: flex; flex-direction: column; gap: 1px; }
.field { display: flex; flex-direction: column; }
.first { margin-bottom: 4px; }
.line { display: flex; justify-content: space-between; padding-right: 1px; }
.line .pick { width: 156px; }
.pair { display: flex; justify-content: space-between; }
.pair .pick { width: 129px; }
.prio { width: 57px; }
.prio input { width: 52px; align-self: flex-end; text-align: right; }
.pick { position: relative; display: block; }
.pick::after { content: ""; position: absolute; right: 7px; top: 9px; border: 3px solid transparent; border-top-color: #707070; border-bottom: 0; }
.pick select { appearance: none; display: block; width: 100%; height: 22px; padding: 1px 16px 0 3px; border: 1px solid #d0d0d0; background: #fff; overflow: hidden; }
.more { width: 23px; height: 22px; border: 1px solid #a0a0a0; }
.setup { width: 291px; margin-right: 9px; height: 149px; padding: 0 8px 0 11px; }
.sgrid { display: grid; grid-template-columns: 81px 1fr; row-gap: 8px; padding-top: 7px; margin-bottom: 4px; }
.sgrid label { line-height: 18px; }
.check { display: flex; gap: 3px; align-items: center; height: 20px; }
.check input { appearance: none; width: 11px; height: 11px; border: 1px solid #909090; flex: none; display: grid; place-items: center; }
.check input:checked::before { content: ""; width: 7px; height: 4px; margin-bottom: 2px; border: solid #555; border-width: 0 0 1px 1px; transform: rotate(-45deg); }
.color { flex: none; width: 200px; }
.crow { display: flex; align-items: center; gap: 8px; padding-top: 1px; }
.cbtn { width: 144px; height: 21px; border: 1px solid #a0a0a0; display: flex; align-items: center; justify-content: space-between; padding: 0 7px 0 5px; white-space: nowrap; }
.cbtn b { width: 10px; height: 10px; background: #808080; border: 1px solid #606060; }
.color .check { align-items: flex-start; height: auto; margin-top: 9px; }
.actions { width: 68px; padding-top: 20px; display: flex; flex-direction: column; gap: 7px; }
.actions button { height: 28px; border: 1px solid #a0a0a0; }
.actions .ok { border-color: #0a5fc8; }

/* status bar */
.status { flex: none; height: 24px; background: #2b579a; color: #fff; display: flex; align-items: center; padding: 0 6px 0 11px; font: 11px/24px "Open Sans", sans-serif; }
.path { flex: 1; }
.sb { width: 24px; height: 20px; display: grid; place-items: center; }
.sb.on { background: #0a5fc8; }
.zoom { margin-left: 3px; }
.z { width: 20px; height: 20px; display: grid; place-items: center; }
.status .dd { margin: 0 2px 0 7px; }
.status input { appearance: none; width: 88px; height: 14px; margin: 0 4px; background: linear-gradient(#9fb3d2, #9fb3d2) center / 100% 1px no-repeat; }
.status input::-webkit-slider-thumb { appearance: none; width: 5px; height: 14px; background: #fff; border: 1px solid #c8c8c8; }
.grip { margin-left: 5px; }
```
